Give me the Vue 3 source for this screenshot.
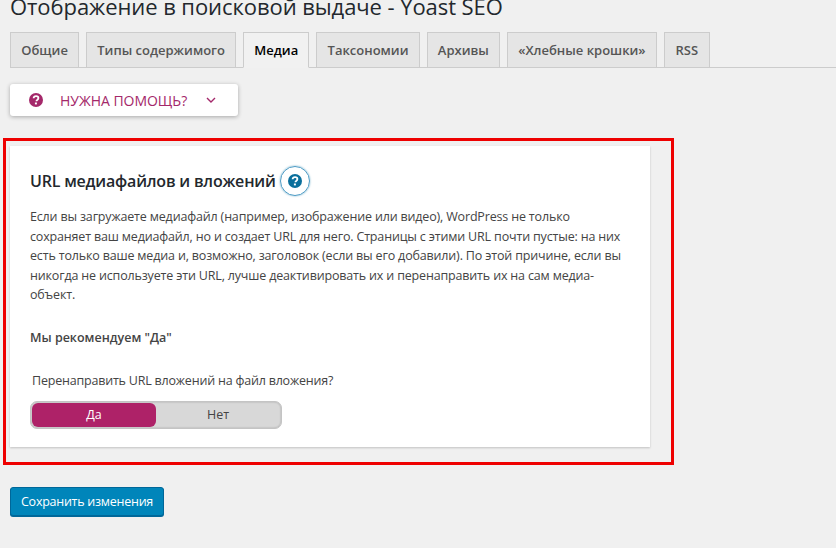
<template>
  <div class="page">
    <h1 class="page-title">Отображение в поисковой выдаче - Yoast SEO</h1>

    <nav class="tabs">
      <a v-for="tab in tabs" :key="tab" class="tab" :class="{ active: tab === 'Медиа' }">{{ tab }}</a>
    </nav>

    <button class="help-btn">
      <svg class="help-icon" width="14" height="14" viewBox="0 0 14 14">
        <circle cx="7" cy="7" r="7" fill="#a4286a" />
        <path d="M4.6 5.3c.1-1.4 1.1-2.1 2.5-2.1 1.4 0 2.3.8 2.3 1.9 0 1-.6 1.4-1.2 1.8-.5.3-.7.6-.7 1.1v.3" fill="none" stroke="#fff" stroke-width="1.8" />
        <rect x="5.9" y="9.5" width="2" height="1.9" fill="#fff" />
      </svg>
      <span class="help-label">НУЖНА ПОМОЩЬ?</span>
      <svg class="help-chevron" width="10" height="6" viewBox="0 0 10 6">
        <path d="M1 1l4 4 4-4" fill="none" stroke="#a4286a" stroke-width="1.4" />
      </svg>
    </button>

    <div class="highlight-wrap">
      <section class="card">
        <div class="card-heading">
          <h2>URL медиафайлов и вложений</h2>
          <span class="info-btn">
            <svg width="14" height="14" viewBox="0 0 14 14">
              <circle cx="7" cy="7" r="7" fill="#0a6f9c" />
              <path d="M4.6 5.3c.1-1.4 1.1-2.1 2.5-2.1 1.4 0 2.3.8 2.3 1.9 0 1-.6 1.4-1.2 1.8-.5.3-.7.6-.7 1.1v.3" fill="none" stroke="#fff" stroke-width="1.8" />
              <rect x="5.9" y="9.5" width="2" height="1.9" fill="#fff" />
            </svg>
          </span>
        </div>
        <p class="card-text">Если вы загружаете медиафайл (например, изображение или видео), WordPress не только<br>сохраняет ваш медиафайл, но и создает URL для него. Страницы с этими URL почти пустые: на них<br>есть только ваше медиа и, возможно, заголовок (если вы его добавили). По этой причине, если вы<br>никогда не используете эти URL, лучше деактивировать их и перенаправить их на сам медиа-<br>объект.</p>
        <p class="card-rec">Мы рекомендуем "Да"</p>
        <p class="toggle-label">Перенаправить URL вложений на файл вложения?</p>
        <div class="toggle">
          <span class="toggle-opt on">Да</span>
          <span class="toggle-opt">Нет</span>
        </div>
      </section>
      <div class="red-frame"></div>
    </div>

    <button class="save-btn">Сохранить изменения</button>
  </div>
</template>

<script setup>
const tabs = ['Общие', 'Типы содержимого', 'Медиа', 'Таксономии', 'Архивы', '«Хлебные крошки»', 'RSS']
</script>

<style>
html, body {
  margin: 0;
  background: #f0f0f0;
  overflow: hidden;
}
</style>

<style scoped>
.page {
  width: 836px;
  height: 548px;
  overflow: hidden;
  box-sizing: border-box;
  padding: 0 0 0 10px;
  font-family: "Open Sans", "Noto Sans", sans-serif;
  color: #444;
}

.page-title {
  margin: -10px 0 0;
  height: 42px;
  font-size: 22px;
  line-height: 32px;
  letter-spacing: -0.07px;
  font-weight: 400;
  color: #23282d;
  white-space: nowrap;
}

.tabs {
  display: flex;
  gap: 7px;
  height: 36px;
  box-sizing: border-box;
  border-bottom: 1px solid #ccc;
}

.tab {
  box-sizing: border-box;
  height: 36px;
  min-width: 46px;
  padding: 0 10.2px;
  display: flex;
  align-items: center;
  justify-content: center;
  border: 1px solid #ccc;
  background: #e5e5e5;
  font-size: 13px;
  font-weight: 600;
  color: #555;
  white-space: nowrap;
}

.tab.active {
  background: #f1f1f1;
  border-bottom-color: #f1f1f1;
  color: #000;
}

.help-btn {
  margin-top: 16px;
  display: flex;
  align-items: center;
  width: 228px;
  height: 32px;
  padding: 0 0 0 19px;
  border: none;
  border-radius: 3px;
  background: #fff;
  box-shadow: 0 1px 4px rgba(0, 0, 0, 0.3);
  font-family: inherit;
  font-size: 14px;
  letter-spacing: -0.03px;
  color: #a4286a;
}

.help-label {
  margin-left: 17px;
}

.help-chevron {
  margin-left: 19px;
}

.highlight-wrap {
  position: relative;
  margin-top: 30px;
  width: 640px;
}

.card {
  box-sizing: border-box;
  height: 301px;
  padding: 20px;
  background: #fff;
  box-shadow: 0 1px 2px rgba(0, 0, 0, 0.2);
}

.card-heading {
  display: flex;
  align-items: center;
  gap: 4px;
  height: 30px;
}

.card-heading h2 {
  margin: 0;
  font-size: 16px;
  letter-spacing: -0.2px;
  font-weight: 600;
  color: #23282d;
  white-space: nowrap;
}

.info-btn {
  box-sizing: border-box;
  width: 30px;
  height: 30px;
  display: flex;
  align-items: center;
  justify-content: center;
  border: 1px solid #4b9ac4;
  border-radius: 50%;
  box-shadow: 0 0 2px rgba(10, 117, 163, 0.6);
}

.card-text {
  margin: 11px 0 0;
  font-size: 12.5px;
  letter-spacing: -0.165px;
  line-height: 19.5px;
  color: #444;
  white-space: nowrap;
}

.card-rec {
  margin: 23px 0 0;
  font-size: 12.5px;
  line-height: 19.5px;
  font-weight: 600;
  color: #444;
}

.toggle-label {
  margin: 24px 0 0 2px;
  font-size: 12.5px;
  letter-spacing: -0.2px;
  line-height: 19.5px;
  color: #444;
}

.toggle {
  box-sizing: border-box;
  margin-top: 10px;
  width: 252px;
  height: 28px;
  display: flex;
  padding: 1px;
  background: #d8d8d8;
  border: 1px solid #c4c4c4;
  border-radius: 7px;
  box-shadow: inset 0 0 2px rgba(0, 0, 0, 0.25);
  font-size: 12.5px;
}

.toggle-opt {
  flex: 1;
  display: flex;
  align-items: center;
  justify-content: center;
  color: #444;
}

.toggle-opt.on {
  background: #ae2268;
  color: #fff;
  border-radius: 6px;
}

.red-frame {
  position: absolute;
  left: -7px;
  top: -8px;
  width: 671px;
  height: 327px;
  box-sizing: border-box;
  border: 3px solid #ee0000;
  pointer-events: none;
}

.save-btn {
  margin-top: 40px;
  display: block;
  box-sizing: border-box;
  width: 154px;
  height: 29px;
  padding: 0;
  border: 1px solid #006799;
  border-radius: 3px;
  background: #0085ba;
  box-shadow: 0 1px 0 #006799;
  font-family: inherit;
  font-size: 12.5px;
  letter-spacing: -0.25px;
  color: #fff;
}
</style>
